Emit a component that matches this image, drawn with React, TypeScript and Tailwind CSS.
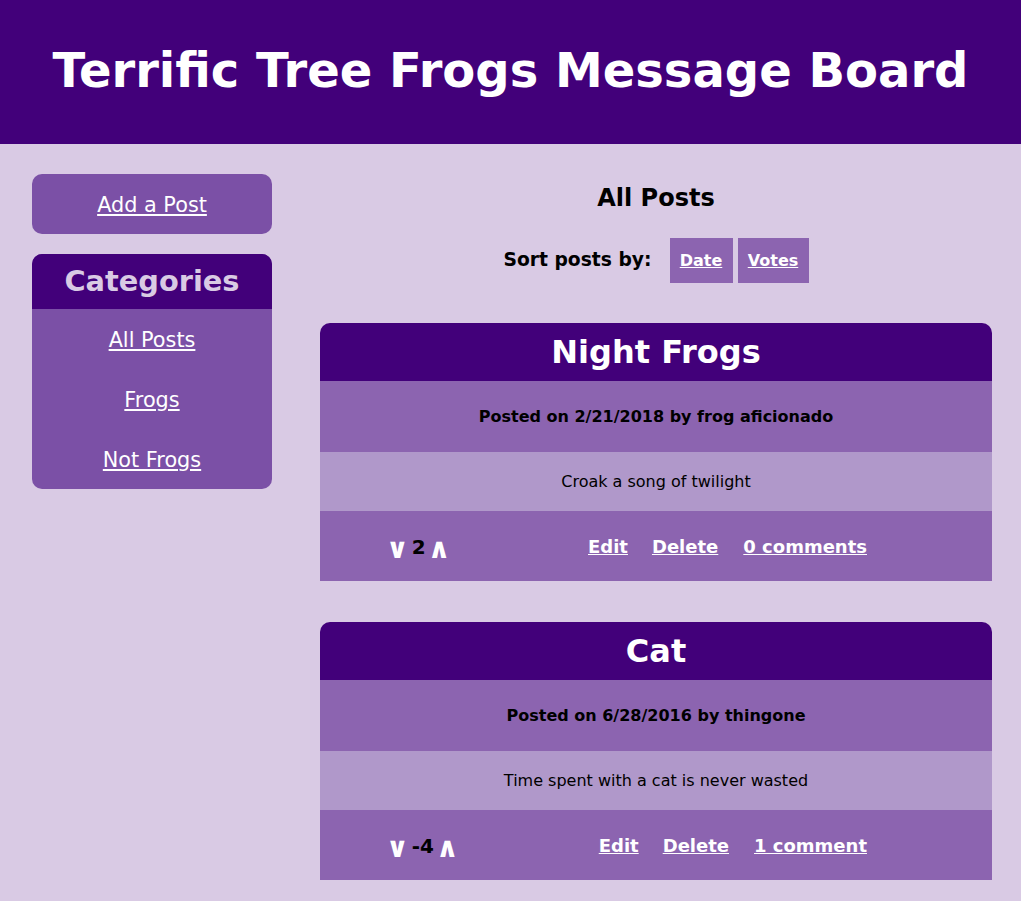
import React from "react";

type Post = {
  title: string;
  meta: string;
  body: string;
  votes: string;
  comments: string;
};

const posts: Post[] = [
  {
    title: "Night Frogs",
    meta: "Posted on 2/21/2018 by frog aficionado",
    body: "Croak a song of twilight",
    votes: "2",
    comments: "0 comments",
  },
  {
    title: "Cat",
    meta: "Posted on 6/28/2016 by thingone",
    body: "Time spent with a cat is never wasted",
    votes: "-4",
    comments: "1 comment",
  },
];

function PostCard({ p }: { p: Post }) {
  return (
    <div className="flex flex-col">
      <div className="h-[58px] rounded-t-[10px] bg-[#42007a] flex items-center justify-center">
        <h2 className="text-[32px] font-bold text-white leading-none">{p.title}</h2>
      </div>
      <div className="h-[71px] bg-[#8c64b0] flex items-center justify-center">
        <p className="text-[16px] font-bold text-black">{p.meta}</p>
      </div>
      <div className="h-[59px] bg-[#b098ca] flex items-center justify-center">
        <p className="text-[16px] text-black">{p.body}</p>
      </div>
      <div className="h-[70px] bg-[#8c64b0] flex items-center justify-between pl-[66px] pr-[125px]">
        <div className="flex items-center font-bold">
          <span className="text-white text-[28px] leading-none mt-[5px]">∨</span>
          <span className="text-black ml-[3px] text-[20px] leading-none mt-[2px]">{p.votes}</span>
          <span className="text-white ml-[2px] text-[28px] leading-none mt-[5px]">∧</span>
        </div>
        <div className="flex items-center text-[18px] font-bold text-white">
          <a className="underline" href="#">Edit</a>
          <a className="underline ml-[24px]" href="#">Delete</a>
          <a className="underline ml-[25px]" href="#">{p.comments}</a>
        </div>
      </div>
    </div>
  );
}

export default function App() {
  return (
    <div className="min-h-[901px] bg-[#d9cae4] font-['DejaVu_Sans',sans-serif]">
      <header className="h-[144px] bg-[#42007a] flex items-center justify-center">
        <h1 className="text-[48px] font-bold text-white leading-none -mt-[4px]">
          Terrific Tree Frogs Message Board
        </h1>
      </header>
      <div className="flex pt-[30px] pl-[32px]">
        <aside className="w-[240px] flex flex-col gap-[20px]">
          <div className="h-[60px] rounded-[10px] bg-[#7b50a6] flex items-center justify-center pt-[3px]">
            <a href="#" className="text-[20.8px] text-white underline">Add a Post</a>
          </div>
          <div className="rounded-[10px] overflow-hidden bg-[#7b50a6]">
            <div className="h-[55px] bg-[#42007a] flex items-center justify-center">
              <h2 className="text-[28.8px] font-bold text-[#d9cae4] leading-none">Categories</h2>
            </div>
            <div className="flex flex-col">
              <div className="h-[60px] flex items-center justify-center pt-[3px]">
                <a href="#" className="text-[20.8px] text-white underline">All Posts</a>
              </div>
              <div className="h-[60px] flex items-center justify-center pt-[3px]">
                <a href="#" className="text-[20.8px] text-white underline">Frogs</a>
              </div>
              <div className="h-[60px] flex items-center justify-center pt-[3px]">
                <a href="#" className="text-[20.8px] text-white underline">Not Frogs</a>
              </div>
            </div>
          </div>
        </aside>
        <main className="ml-[48px] w-[672px] flex flex-col">
          <h2 className="text-[24px] font-bold text-black text-center leading-none mt-[12px]">All Posts</h2>
          <div className="flex items-center justify-center mt-[28px]">
            <h3 className="text-[18.72px] font-bold text-black mr-[18px]">Sort posts by:</h3>
            <a href="#" className="h-[45px] w-[63px] bg-[#8c64b0] flex items-center justify-center text-[16px] font-bold text-white underline">Date</a>
            <a href="#" className="h-[45px] w-[71px] ml-[5px] bg-[#8c64b0] flex items-center justify-center text-[16px] font-bold text-white underline">Votes</a>
          </div>
          <div className="flex flex-col gap-[41px] mt-[40px]">
            {posts.map((p) => (
              <PostCard key={p.title} p={p} />
            ))}
          </div>
        </main>
      </div>
    </div>
  );
}
